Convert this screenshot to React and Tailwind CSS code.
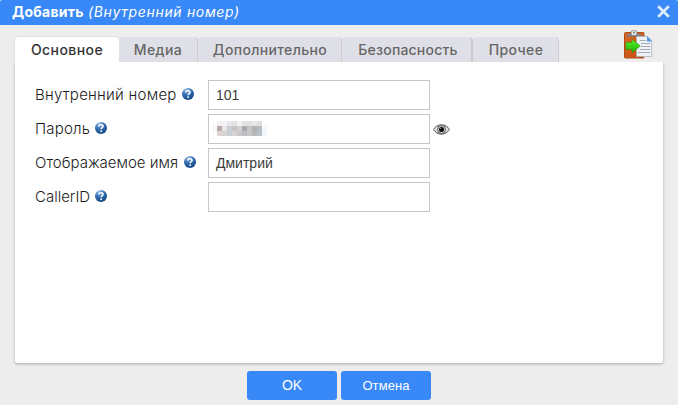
import React from "react";

const tabs = [
  { label: "Основное", cls: "w-[104px] bg-white text-[#333] tracking-[0.42px] shadow-[0_0_2px_rgba(0,0,0,0.2)]" },
  { label: "Медиа", cls: "w-[79px] bg-[#dfe0e7] text-[#666] tracking-[0.4px] border-r border-[#cbcbd0]" },
  { label: "Дополнительно", cls: "w-[144px] bg-[#dfe0e7] pl-px text-[#666] tracking-[0.35px] border-r border-[#cbcbd0]" },
  { label: "Безопасность", cls: "w-[131px] bg-[#dfe0e7] pl-[3px] text-[#666] tracking-[0.2px] border-r-2 border-[#cbcbd0]" },
  { label: "Прочее", cls: "w-[86px] bg-[#dfe0e7] pl-px text-[#666] tracking-[0.4px] border-r border-[#cbcbd0]" },
];

const mosaic = [
  "#fefefe", "#f4f1f1", "#f3f3f4", "#e4e7e9", "#dfe2e4", "#f1f3f4", "#e6e2e2", "#dfe2e4", "#eae8e8", "#dedede", "#fefefe",
  "#fbf9f8", "#b8acac", "#e7e5e6", "#cbcdd2", "#c6c3c3", "#cfcfd2", "#ada9ab", "#c6c6c7", "#b4b1b3", "#b8bcc0", "#f6f9fc",
  "#ffffff", "#dfd4d2", "#d4d3d2", "#c7cfd6", "#d5d3d2", "#cbc7c8", "#bac0c4", "#c8c7c5", "#b8b7ba", "#b8c2c6", "#f1f6fb",
];

function HelpIcon() {
  return (
    <svg className="-mt-[2px] h-3 w-3 shrink-0" viewBox="0 0 12 12">
      <defs>
        <radialGradient id="helpBall" cx="35%" cy="15%" r="85%">
          <stop offset="0" stopColor="#9dc0e8" />
          <stop offset=".5" stopColor="#3470b4" />
          <stop offset="1" stopColor="#174884" />
        </radialGradient>
      </defs>
      <circle cx="6" cy="6" r="6" fill="url(#helpBall)" />
      <path d="M4 4.4C4 2.1 8.1 2.1 8.1 4.3C8.1 5.6 6.2 5.6 6.2 7.2" fill="none" stroke="#fff" strokeWidth="1.5" />
      <circle cx="6.2" cy="9.2" r=".9" fill="#fff" />
    </svg>
  );
}

function EyeIcon() {
  return (
    <svg className="ml-[3px] h-[11px] w-[17px]" viewBox="0 0 17 11">
      <path d="M.5 5.5C4-.8 13-.8 16.5 5.5C13 11.8 4 11.8.5 5.5Z" fill="#ddd" stroke="#555" strokeWidth="1" />
      <circle cx="8.5" cy="5.5" r="4" fill="#ccc" stroke="#555" strokeWidth=".9" />
      <circle cx="8.5" cy="5.5" r="2.5" fill="#080808" />
      <circle cx="7.7" cy="4.4" r=".6" fill="#999" />
    </svg>
  );
}

function PasteIcon() {
  return (
    <svg className="h-[30px] w-[30px]" viewBox="0 0 30 30">
      <defs>
        <linearGradient id="board" x2="1" y2="1">
          <stop stopColor="#dd6a25" />
          <stop offset="1" stopColor="#c04a0c" />
        </linearGradient>
        <linearGradient id="arrow" x2="0" y2="1">
          <stop stopColor="#5ff02e" />
          <stop offset="1" stopColor="#16b500" />
        </linearGradient>
      </defs>
      <rect x="1.5" y="2.5" width="19.5" height="25.5" rx="1" fill="url(#board)" stroke="#b04c18" />
      <path d="M4 6.5V5.4Q4 4 6 4H8V2.4Q8 .8 9.5.8H12.5Q14 .8 14 2.4V4H16.5Q18.5 4 18.5 5.4V6.5Z" fill="#858585" stroke="#707070" strokeWidth=".5" />
      <rect x="8.6" y="1.2" width="4.8" height="3.8" rx="1" fill="#eee" />
      <rect x="10" y="2" width="2" height="1.6" fill="#888" />
      <path d="M13.5 6.5H24.5L28.7 10.7V26.5H13.5Z" fill="#edf1f5" stroke="#a8b4bd" strokeWidth=".8" />
      <path d="M24 6.3L29 11.5H24Z" fill="#4c94ec" />
      <path d="M17 10.5H23M18 13.5H27M18 16.5H27M17 19.5H27M15 22.5H27" stroke="#a4adb5" strokeWidth="1" />
      <path d="M3 12.5H9V9.2L17.3 16L9 22.8V19.3H3Z" fill="url(#arrow)" stroke="#2b9714" strokeWidth=".6" />
    </svg>
  );
}

function Row({ label, cls, value, children, after }) {
  return (
    <div className="flex h-[30px] items-center">
      <div className="flex w-[173px] items-center">
        <span className={"whitespace-nowrap text-[15px] font-light leading-5 text-[#1c1c1c] " + cls}>{label}</span>
        <HelpIcon />
      </div>
      <div className="flex h-[30px] w-[222px] items-center border border-[#c6c6c8] bg-white px-[7px] font-['Liberation_Sans',sans-serif] text-[14px] text-[#3c3c3c]">
        {value}
        {children}
      </div>
      {after}
    </div>
  );
}

export default function App() {
  return (
    <div className="flex h-[405px] w-[678px] flex-col overflow-hidden bg-[#ededed] font-[Inter,sans-serif]">
      <header className="flex h-[25px] shrink-0 items-center justify-between rounded-t-[2px] bg-[#3888f7] pl-3 pr-2 text-white">
        <div className="-mt-px flex items-center whitespace-nowrap text-[14px] leading-5">
          <span className="w-[76px] font-bold tracking-[0.25px]">Добавить</span>
          <span className="font-normal italic tracking-[0.65px]">(Внутренний номер)</span>
        </div>
        <svg className="-mt-[2px] h-[13px] w-[13px]" viewBox="0 0 13 13">
          <path d="M1.2 1.2L11.8 11.8M11.8 1.2L1.2 11.8" stroke="#deecff" strokeWidth="2.7" />
        </svg>
      </header>
      <div className="flex h-[37px] shrink-0 items-end justify-between pl-[15px] pr-[25px]">
        <nav className="flex">
          {tabs.map((tab) => (
            <div key={tab.label} className={"flex h-[25px] items-center justify-center whitespace-nowrap rounded-t-[4px] text-[14px] font-medium " + tab.cls}>
              {tab.label}
            </div>
          ))}
        </nav>
        <div className="mb-[2px]"><PasteIcon /></div>
      </div>
      <main className="mx-[15px] flex h-[301px] w-[648px] shrink-0 flex-col gap-1 rounded-b-[2px] bg-white pl-5 pt-[18px] shadow-[0_1px_3px_rgba(0,0,0,0.3)] [clip-path:inset(0_-5px_-6px_-5px)]">
        <Row label="Внутренний номер" cls="mr-[5px] w-[142px] tracking-[0.25px]" value="101" />
        <Row label="Пароль" cls="mr-[5px] w-[55px] tracking-[0.2px]" after={<EyeIcon />}>
          <div className="-ml-1 -mt-[2px] grid grid-cols-[repeat(11,5px)] grid-rows-[repeat(3,5px)]">
            {mosaic.map((color, i) => (
              <span key={i} style={{ backgroundColor: color }} />
            ))}
          </div>
        </Row>
        <Row label="Отображаемое имя" cls="mr-[6px] w-[143px]" value="Дмитрий" />
        <Row label="CallerID" cls="mr-[5px] w-[55px]" />
      </main>
      <footer className="flex justify-center gap-1 pt-2 font-['Liberation_Sans',sans-serif] text-[14px] text-white">
        <button className="h-[29px] w-[90px] rounded-[3px] bg-[#3888f7] tracking-[-0.2px]">OK</button>
        <button className="h-[29px] w-[90px] rounded-[3px] bg-[#3888f7] text-[13px] tracking-[0.1px]">Отмена</button>
      </footer>
    </div>
  );
}
